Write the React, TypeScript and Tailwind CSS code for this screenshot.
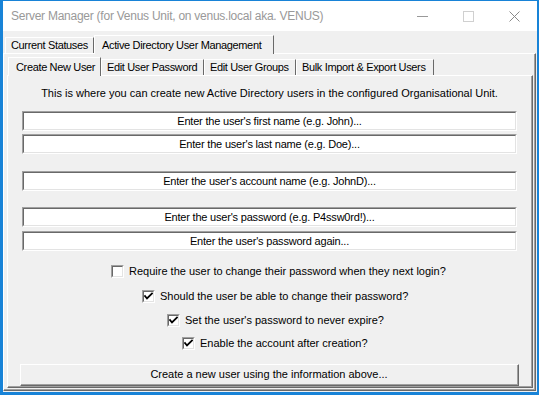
const font = { fontFamily: '"Liberation Sans", Arial, sans-serif' };

const Sunken = ({ className = "", children }: { className?: string; children?: React.ReactNode }) => (
  <div className={`border-t border-l border-t-[#a0a0a0] border-l-[#a0a0a0] border-b border-r border-b-white border-r-white ${className}`}>
    <div className="h-full border-t border-l border-t-[#696969] border-l-[#696969] border-b border-r border-b-[#e3e3e3] border-r-[#e3e3e3] bg-white flex items-center justify-center">
      {children}
    </div>
  </div>
);

const TextBox = ({ text, className = "" }: { text: string; className?: string }) => (
  <Sunken className={`h-[20px] ${className}`}>
    <span className="text-[11px] leading-none text-black tracking-[-0.2px]">{text}</span>
  </Sunken>
);

const Check = ({ checked, label, pad, className = "" }: { checked: boolean; label: string; pad: string; className?: string }) => (
  <div className={`flex items-center h-[16px] gap-[5px] ${pad} ${className}`}>
    <Sunken className="w-[13px] h-[13px]">
      {checked && (
        <svg width="9" height="9" viewBox="0 0 9 9">
          <path d="M1 4 L3 6.5 L8 1.5" fill="none" stroke="#000" strokeWidth="1.8" strokeLinecap="square" />
        </svg>
      )}
    </Sunken>
    <span className="text-[11px] leading-none text-black">{label}</span>
  </div>
);

const Tab = ({ label, selected, w }: { label: string; selected?: boolean; w: string }) => (
  <div
    className={`${w} flex items-center border-t border-l border-t-white border-l-white border-r border-r-[#696969] ${
      selected ? "h-[19px] pl-[7px] bg-[#f0f0f0] relative z-10 -mb-[1px]" : "h-[16px] pl-[5px]"
    }`}
  >
    <span className="text-[11px] leading-none text-black whitespace-nowrap tracking-[-0.35px]">{label}</span>
  </div>
);

export default function App() {
  return (
    <div
      style={font}
      className="w-[539px] h-[395px] flex flex-col bg-[#f0f0f0] border-t border-l-[3px] border-r-2 border-b-[3px] border-[#1883d7] overflow-hidden"
    >
      {/* title bar */}
      <div className="h-[30px] bg-white flex items-center justify-between shrink-0">
        <span className="pl-[8px] pb-[1px] text-[12px] tracking-[-0.25px] text-[#999999] whitespace-nowrap">
          Server Manager (for Venus Unit, on venus.local aka. VENUS)
        </span>
        <div className="flex h-full">
          <div className="w-[46px] h-full flex items-center justify-center">
            <svg width="11" height="11" viewBox="0 0 11 11">
              <path d="M0 5.5 H11" stroke="#999" strokeWidth="1" />
            </svg>
          </div>
          <div className="w-[46px] h-full flex items-center justify-center">
            <svg width="11" height="11" viewBox="0 0 11 11">
              <rect x="0.5" y="0.5" width="10" height="10" fill="none" stroke="#d0d0d0" strokeWidth="1" />
            </svg>
          </div>
          <div className="w-[46px] h-full flex items-center justify-center">
            <svg width="11" height="11" viewBox="0 0 11 11">
              <path d="M0.5 0.5 L10.5 10.5 M10.5 0.5 L0.5 10.5" stroke="#8a8a8a" strokeWidth="1" />
            </svg>
          </div>
        </div>
      </div>

      {/* body */}
      <div className="flex-1 flex flex-col pt-[3px] pb-[1px] pr-[1px]">
        <div className="flex items-end pl-[2px] h-[19px]">
          <Tab label="Current Statuses" w="w-[89px]" />
          <Tab label="Active Directory User Management" w="w-[180px]" selected />
        </div>

        {/* outer tab page */}
        <div className="flex-1 flex flex-col border-t border-l border-white border-r border-b border-r-[#696969] border-b-[#696969]">
          <div className="flex-1 flex flex-col border-r border-b border-r-[#a0a0a0] border-b-[#a0a0a0] pt-[3px] pl-[3px] pr-[1px] pb-[1px]">
            <div className="flex items-end h-[18px] pl-[1px]">
              <Tab label="Create New User" w="w-[93px]" selected />
              <Tab label="Edit User Password" w="w-[103px]" />
              <Tab label="Edit User Groups" w="w-[92px]" />
              <Tab label="Bulk Import & Export Users" w="w-[138px]" />
            </div>

            {/* inner tab page */}
            <div className="flex-1 flex flex-col border-t border-l border-white border-r border-b border-r-[#696969] border-b-[#696969]">
              <div className="flex-1 flex flex-col border-r border-b border-r-[#a0a0a0] border-b-[#a0a0a0] px-[14px] pt-[10px]">
                <p className="h-[14px] text-[11px] leading-[14px] text-black text-center whitespace-nowrap">
                  This is where you can create new Active Directory users in the configured Organisational Unit.
                </p>

                <TextBox className="mt-[11px]" text="Enter the user's first name (e.g. John)..." />
                <TextBox className="mt-[3px]" text="Enter the user's last name (e.g. Doe)..." />
                <TextBox className="mt-[17px]" text="Enter the user's account name (e.g. JohnD)..." />
                <TextBox className="mt-[16px]" text="Enter the user's password (e.g. P4ssw0rd!)..." />
                <TextBox className="mt-[4px]" text="Enter the user's password again..." />

                <div className="-ml-[14px] flex flex-col">
                  <Check className="mt-[12px]" pad="pl-[103px]" checked={false} label="Require the user to change their password when they next login?" />
                  <Check className="mt-[9px]" pad="pl-[134px]" checked label="Should the user be able to change their password?" />
                  <Check className="mt-[8px]" pad="pl-[159px]" checked label="Set the user's password to never expire?" />
                  <Check className="mt-[7px]" pad="pl-[174px]" checked label="Enable the account after creation?" />
                </div>

                <div className="mt-[13px] -mx-[2px] h-[22px] border-t border-l border-white border-r border-b border-r-[#696969] border-b-[#696969]">
                  <div className="h-full flex items-center justify-center border-r border-b border-r-[#a0a0a0] border-b-[#a0a0a0] bg-[#f0f0f0]">
                    <span className="text-[11px] leading-none text-black">Create a new user using the information above...</span>
                  </div>
                </div>
              </div>
            </div>
          </div>
        </div>
      </div>
    </div>
  );
}
